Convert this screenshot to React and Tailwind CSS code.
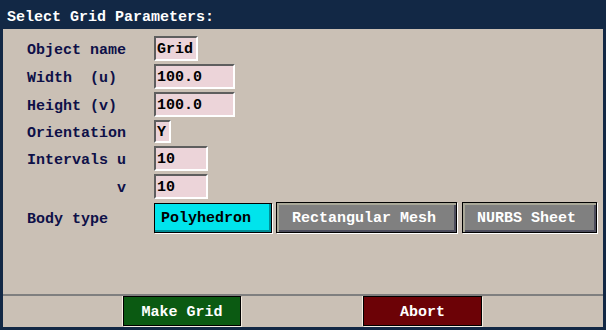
import React from "react";

const Field = ({ w, h = "h-[25px]", children }) => (
  <div
    className={`${w} ${h} bg-[#ecd4d9] border-2 border-t-[#5e5e5e] border-l-[#5e5e5e] border-r-white border-b-white pl-[1px] text-black leading-[17px] flex items-center pt-[2px]`}
  >
    {children}
  </div>
);

const Row = ({ label, h = "h-[25px]", children }) => (
  <div className={`flex items-center ${h}`}>
    <div className="w-[127px] whitespace-pre text-[#0e1048] leading-[17px] pt-[3px]">{label}</div>
    {children}
  </div>
);

export default function App() {
  return (
    <div className="w-[606px] h-[330px] bg-[#122845] flex flex-col font-['Liberation_Mono',monospace] text-[15px] font-bold">
      <div className="h-[29px] shrink-0 pl-[7px] pt-[9px] text-white leading-[17px]">
        Select Grid Parameters:
      </div>
      <div className="flex-1 mx-[3px] mb-[3px] bg-[#cac0b5] flex flex-col">
        <div className="h-[265px] shrink-0 pl-[24px] pt-[7px] flex flex-col gap-[3px]">
          <Row label="Object name">
            <Field w="w-[44px]">Grid</Field>
          </Row>
          <Row label="Width  (u)">
            <Field w="w-[81px]">100.0</Field>
          </Row>
          <Row label="Height (v)">
            <Field w="w-[81px]">100.0</Field>
          </Row>
          <Row label="Orientation" h="h-[23px]">
            <Field w="w-[17px]" h="h-[23px]">Y</Field>
          </Row>
          <Row label="Intervals u">
            <Field w="w-[54px]">10</Field>
          </Row>
          <Row label="          v">
            <Field w="w-[54px]">10</Field>
          </Row>
          <Row label="Body type" h="h-[31px]">
            <div className="w-[118px] h-[30px] bg-[#00e4ec] border border-black shadow-[1px_1px_0_#ffffff,inset_-2px_-2px_0_#008e96] pl-[6px] flex items-center text-black leading-[17px] pt-[1px]">
              Polyhedron
            </div>
            <div className="ml-[4px] w-[181px] h-[31px] bg-[#808080] border border-black shadow-[1px_1px_0_#ffffff,inset_2px_2px_0_#a9a898,inset_-2px_-2px_0_#4c4c5c] pl-[15px] flex items-center text-white leading-[17px] pt-[1px]">
              Rectangular Mesh
            </div>
            <div className="ml-[5px] w-[135px] h-[31px] bg-[#808080] border border-black shadow-[1px_1px_0_#ffffff,inset_2px_2px_0_#a9a898,inset_-2px_-2px_0_#4c4c5c] pl-[14px] flex items-center text-white leading-[17px] pt-[1px]">
              NURBS Sheet
            </div>
          </Row>
        </div>
        <div className="h-[2px] shrink-0 bg-[#7f7f7f]" />
        <div className="flex-1 flex items-start">
          <div className="ml-[120px] w-[118px] h-[30px] bg-[#0b5a12] border border-black shadow-[1px_1px_0_#f4ece0,-1px_0_0_#f4ece0] flex items-center justify-center text-white leading-[17px] pt-[3px]">
            Make Grid
          </div>
          <div className="ml-[122px] w-[119px] h-[30px] bg-[#6c0206] border border-black shadow-[1px_1px_0_#f4ece0,-1px_0_0_#f4ece0] flex items-center justify-center text-white leading-[17px] pt-[3px]">
            Abort
          </div>
        </div>
      </div>
    </div>
  );
}
